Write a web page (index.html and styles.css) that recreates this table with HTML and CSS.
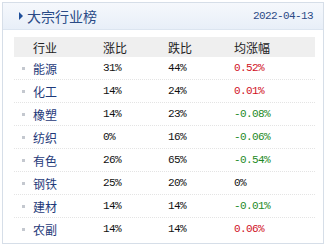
FILE: index.html
```html
<!DOCTYPE html>
<html>
<head>
<meta charset="utf-8">
<link rel="stylesheet" href="styles.css">
</head>
<body>
<div class="box">
  <div class="title">
    <span class="arrow"></span>
    <span class="title-text">大宗行业榜</span>
    <span class="date">2022-04-13</span>
  </div>
  <div class="table">
    <div class="head">
      <span class="c1">行业</span><span class="c2">涨比</span><span class="c3">跌比</span><span class="c4">均涨幅</span>
    </div>
    <div class="row"><span class="c1"><i class="dot"></i>能源</span><span class="c2 num">31%</span><span class="c3 num">44%</span><span class="c4 num up">0.52%</span></div>
    <div class="row"><span class="c1"><i class="dot"></i>化工</span><span class="c2 num">14%</span><span class="c3 num">24%</span><span class="c4 num up">0.01%</span></div>
    <div class="row"><span class="c1"><i class="dot"></i>橡塑</span><span class="c2 num">14%</span><span class="c3 num">23%</span><span class="c4 num down">-0.08%</span></div>
    <div class="row"><span class="c1"><i class="dot"></i>纺织</span><span class="c2 num">0%</span><span class="c3 num">16%</span><span class="c4 num down">-0.06%</span></div>
    <div class="row"><span class="c1"><i class="dot"></i>有色</span><span class="c2 num">26%</span><span class="c3 num">65%</span><span class="c4 num down">-0.54%</span></div>
    <div class="row"><span class="c1"><i class="dot"></i>钢铁</span><span class="c2 num">25%</span><span class="c3 num">20%</span><span class="c4 num">0%</span></div>
    <div class="row"><span class="c1"><i class="dot"></i>建材</span><span class="c2 num">14%</span><span class="c3 num">14%</span><span class="c4 num down">-0.01%</span></div>
    <div class="row last"><span class="c1"><i class="dot"></i>农副</span><span class="c2 num">14%</span><span class="c3 num">14%</span><span class="c4 num up">0.06%</span></div>
  </div>
</div>
</body>
</html>
```
FILE: styles.css
```css
html, body {
  margin: 0;
  padding: 0;
  background: #ffffff;
}
body {
  padding: 2px 0 0 2px;
  font-family: "Noto Sans CJK SC", sans-serif;
}
.box {
  width: 320px;
  height: 240px;
  border: 1px solid #d6dee8;
  box-sizing: content-box;
}
.title {
  height: 26px;
  display: flex;
  align-items: center;
  background: linear-gradient(#f5f8fc, #e8eff8);
  border-bottom: 1px solid #dce5f0;
}
.arrow {
  width: 0;
  height: 0;
  border-left: 4px solid #1f4f9a;
  border-top: 4px solid transparent;
  border-bottom: 4px solid transparent;
  margin-left: 16px;
  margin-right: 4px;
}
.title-text {
  font-size: 14px;
  color: #2a4b86;
  line-height: 1;
}
.date {
  margin-left: auto;
  margin-right: 10px;
  font-family: "Liberation Mono", monospace;
  font-size: 11px;
  letter-spacing: -0.6px;
  color: #2b4a86;
}
.table {
  padding: 7px 8px 0 11px;
}
.head {
  height: 20px;
  background: #efefef;
  display: flex;
  align-items: center;
  font-size: 12px;
  color: #222;
}
.row {
  height: 22px;
  display: flex;
  align-items: center;
  border-bottom: 1px dotted #e4e4e4;
  font-size: 12px;
}
.row.last {
  border-bottom: none;
}
.c1 {
  width: 89px;
  padding-left: 19px;
  box-sizing: border-box;
  color: #1f3a7a;
  position: relative;
  display: flex;
  align-items: center;
}
.head .c1 { color: #222; }
.dot {
  width: 3px;
  height: 3px;
  background: #c4c8cf;
  position: absolute;
  left: 8px;
}
.c2 { width: 65px; }
.c3 { width: 66px; }
.c4 { flex: 1; }
.num {
  font-family: "Liberation Mono", monospace;
  font-size: 11px;
  letter-spacing: -0.6px;
  color: #111;
}
.up { color: #d0101e; }
.down { color: #1d8a25; }
```
